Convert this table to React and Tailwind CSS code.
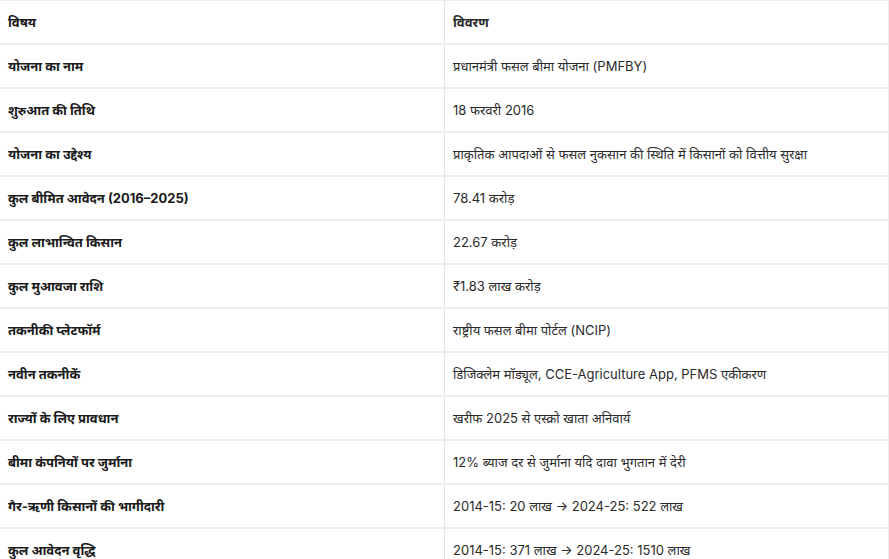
import React from "react";

const rows = [
  ["योजना का नाम", "प्रधानमंत्री फसल बीमा योजना (PMFBY)"],
  ["शुरुआत की तिथि", "18 फरवरी 2016"],
  ["योजना का उद्देश्य", "प्राकृतिक आपदाओं से फसल नुकसान की स्थिति में किसानों को वित्तीय सुरक्षा"],
  ["कुल बीमित आवेदन (2016–2025)", "78.41 करोड़"],
  ["कुल लाभान्वित किसान", "22.67 करोड़"],
  ["कुल मुआवजा राशि", "₹1.83 लाख करोड़"],
  ["तकनीकी प्लेटफॉर्म", "राष्ट्रीय फसल बीमा पोर्टल (NCIP)"],
  ["नवीन तकनीकें", "डिजिक्लेम मॉड्यूल, CCE-Agriculture App, PFMS एकीकरण"],
  ["राज्यों के लिए प्रावधान", "खरीफ 2025 से एस्क्रो खाता अनिवार्य"],
  ["बीमा कंपनियों पर जुर्माना", "12% ब्याज दर से जुर्माना यदि दावा भुगतान में देरी"],
  ["गैर-ऋणी किसानों की भागीदारी", "2014-15: 20 लाख → 2024-25: 522 लाख"],
  ["कुल आवेदन वृद्धि", "2014-15: 371 लाख → 2024-25: 1510 लाख"],
];

function Row({ a, b, head }) {
  return (
    <div className="grid grid-cols-[445px_1fr] h-[44px] border-b-2 border-[#ececec]">
      <div className="flex items-center pl-2 pt-[2px] border-r border-[#e4e4e4] font-bold text-[#1a1a1a]">{a}</div>
      <div className={"flex items-center pl-2 pt-[2px] text-[#2a2a2a] " + (head ? "font-bold" : "font-normal")}>{b}</div>
    </div>
  );
}

export default function App() {
  return (
    <div
      className="w-[889px] h-[559px] overflow-hidden bg-white text-[13px]"
      style={{ fontFamily: 'Inter, "Noto Sans", "Noto Sans Devanagari", sans-serif' }}
    >
      <div className="border-t border-r border-[#ececec]">
        <Row a="विषय" b="विवरण" head />
        {rows.map(([a, b]) => (
          <Row key={a} a={a} b={b} />
        ))}
      </div>
    </div>
  );
}
